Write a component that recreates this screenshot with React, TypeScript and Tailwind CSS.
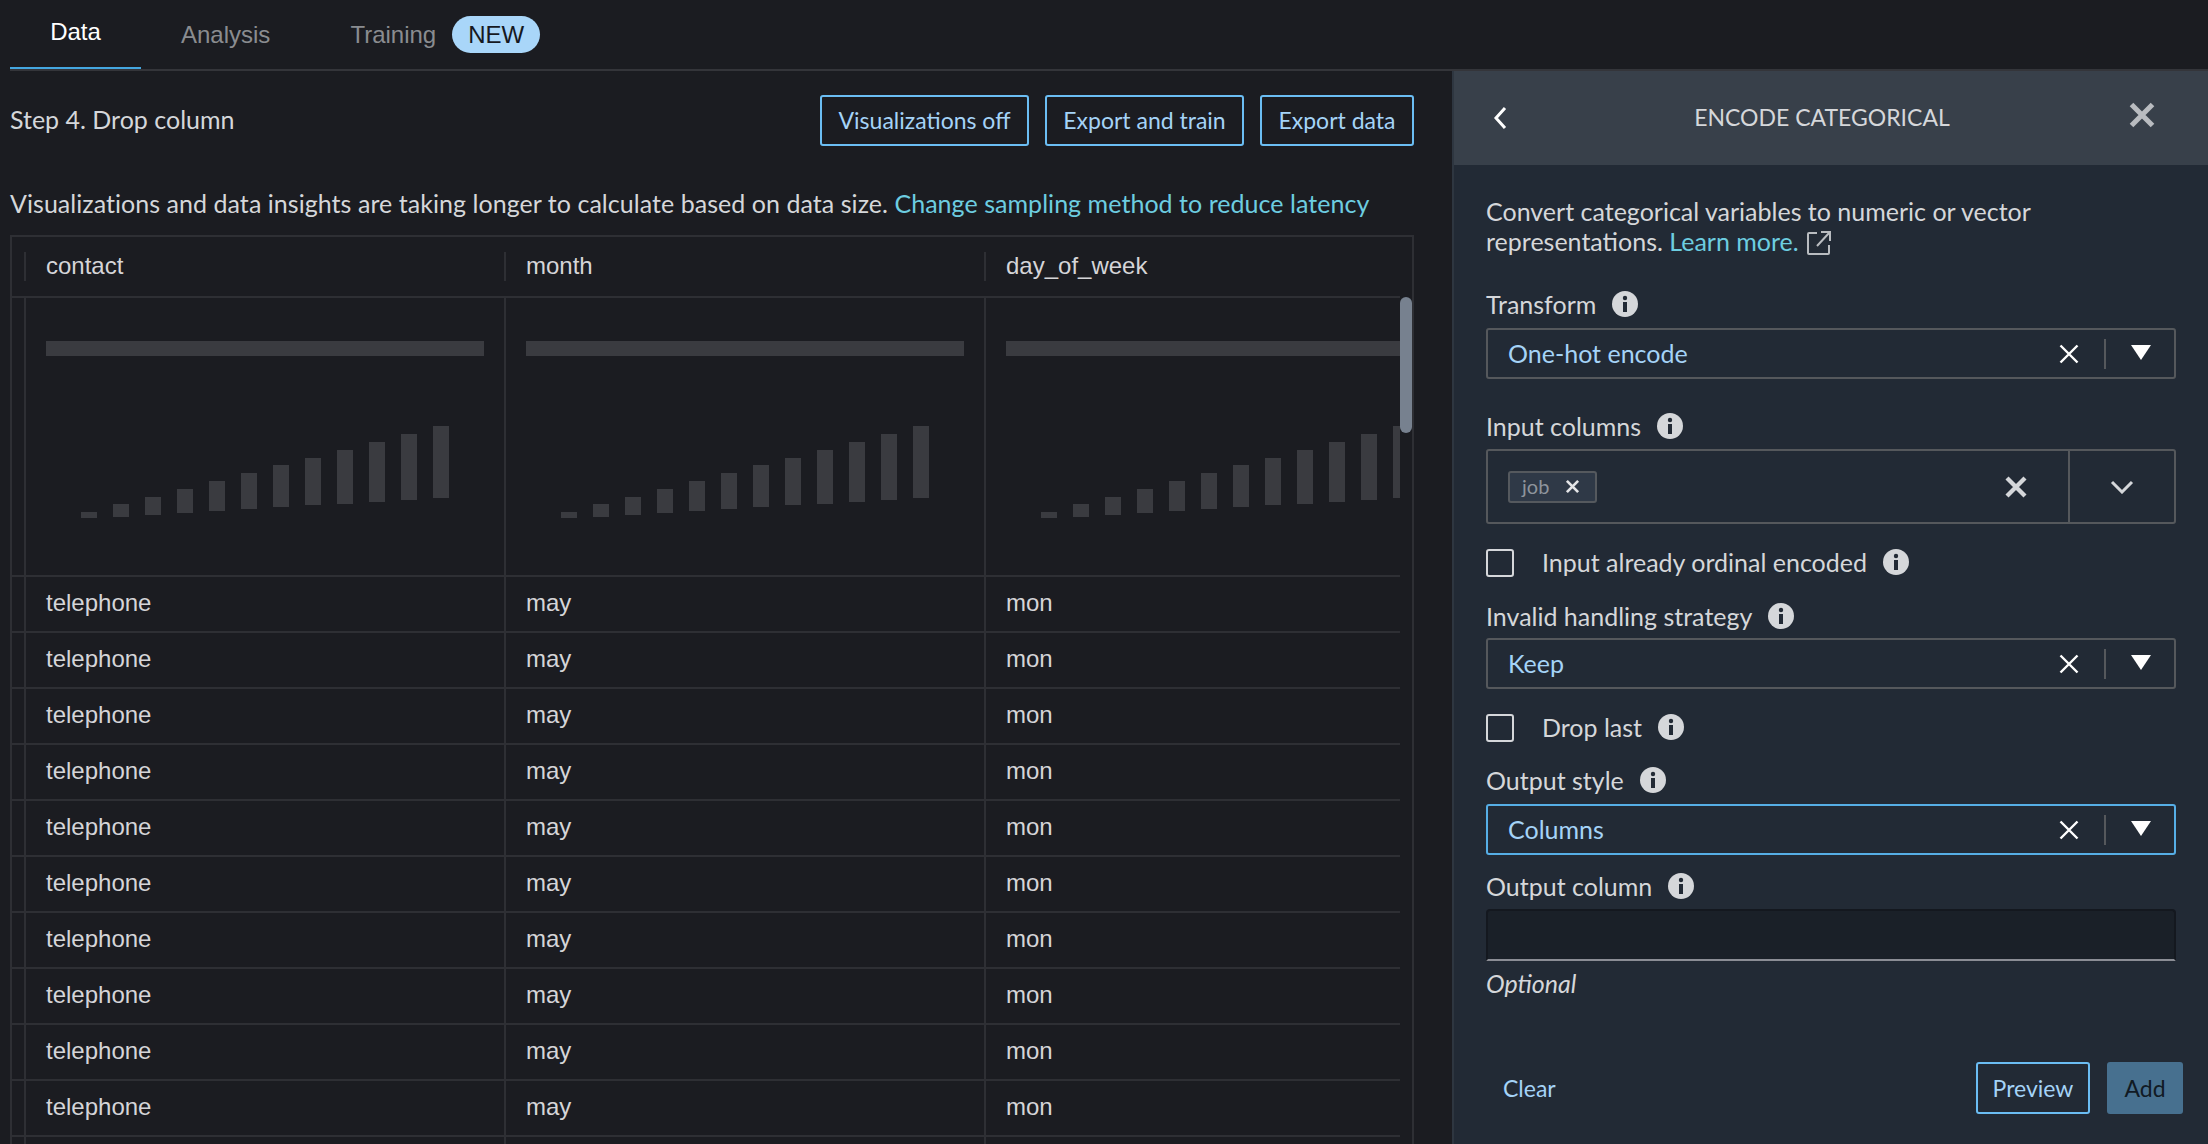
const UI = "font-['Lato','Liberation_Sans',sans-serif]";
const ARIAL = "font-['Liberation_Sans',Arial,sans-serif]";

const BARS = [
  [512, 518],
  [504, 517],
  [497, 515],
  [489, 513],
  [481, 511],
  [473, 509],
  [465, 507],
  [458, 505],
  [450, 504],
  [442, 502],
  [434, 500],
  [426, 498],
];

const ROWS = Array.from({ length: 10 });

function Histogram() {
  // coordinates are page y minus the top of the row (298)
  return (
    <svg width="438" height="277" className="shrink-0 block">
      <rect x="0" y="43" width="438" height="15" fill="#3a3b40" />
      {BARS.map(([top, bottom], i) => (
        <rect
          key={i}
          x={35 + i * 32}
          y={top - 298}
          width="16"
          height={bottom - top}
          fill="#3a3b40"
        />
      ))}
    </svg>
  );
}

function InfoIcon() {
  return (
    <svg width="26" height="26" viewBox="0 0 26 26" className="shrink-0 -mt-[2px]">
      <circle cx="13" cy="13" r="13" fill="#d5d7da" />
      <circle cx="13" cy="7" r="2.2" fill="#222a35" />
      <rect x="11" y="11" width="4" height="10" fill="#222a35" />
    </svg>
  );
}

function Label({ children, className = "" }: { children: string; className?: string }) {
  return (
    <div className={`flex items-center gap-[16px] h-[30px] text-[#d5d7da] ${className}`}>
      <span className="-mt-[1px]">{children}</span>
      <InfoIcon />
    </div>
  );
}

function ThinX() {
  return (
    <svg width="20" height="20" viewBox="0 0 20 20" className="shrink-0">
      <path d="M1.5 1.5 L18.5 18.5 M18.5 1.5 L1.5 18.5" stroke="#ffffff" strokeWidth="2.4" />
    </svg>
  );
}

function BoldX({ size, color }: { size: number; color: string }) {
  return (
    <svg width={size} height={size} viewBox="0 0 20 20" className="shrink-0">
      <path d="M2.5 2.5 L17.5 17.5 M17.5 2.5 L2.5 17.5" stroke={color} strokeWidth="3.6" />
    </svg>
  );
}

function Select({ value, focused = false, className = "" }: { value: string; focused?: boolean; className?: string }) {
  return (
    <div
      className={`flex items-center h-[51px] border-2 rounded-[3px] pl-[20px] ${
        focused ? "border-[#56aee6]" : "border-[#55585c]"
      } ${className}`}
    >
      <span className="flex-1 text-[#a5d3f7]">{value}</span>
      <ThinX />
      <div className="w-[2px] h-[30px] bg-[#55585c] ml-[25px]" />
      <svg width="20" height="15" viewBox="0 0 20 15" className="ml-[25px] mr-[23px] mb-[2px]">
        <path d="M0 0 H20 L10 15 Z" fill="#ffffff" />
      </svg>
    </div>
  );
}

function Checkbox() {
  return <div className="w-[28px] h-[28px] border-2 border-[#d5d7da] rounded-[3px] shrink-0" />;
}

function Table() {
  const cellLine = "border-b-2 border-[#2e2f34]";
  const cols = ["telephone", "may", "mon"];
  return (
    <div className={`flex ml-[10px] mt-[17px] w-[1404px] border-x-2 border-t-2 border-[#2e2f34] ${ARIAL} text-[24px] text-[#d5d5d8]`}>
      <div className="w-[1388px] overflow-hidden">
        <div className={`flex h-[61px] items-center w-[1500px] ${cellLine}`}>
          <div className="w-[12px]" />
          {["contact", "month", "day_of_week"].map((name) => (
            <div key={name} className="w-[480px] h-[29px] flex items-center border-l-2 border-[#2e2f34] pl-[20px] pb-[2px]">
              {name}
            </div>
          ))}
        </div>
        <div className={`flex h-[279px] w-[1500px] ${cellLine}`}>
          <div className="w-[12px]" />
          {[0, 1, 2].map((c) => (
            <div key={c} className="w-[480px] border-l-2 border-[#2e2f34] pl-[20px] overflow-hidden">
              <Histogram />
            </div>
          ))}
        </div>
        {ROWS.map((_, i) => (
          <div key={i} className={`flex h-[56px] w-[1500px] ${cellLine}`}>
            <div className="w-[12px]" />
            {cols.map((v) => (
              <div key={v} className="w-[480px] flex items-center border-l-2 border-[#2e2f34] pl-[20px] pb-[2px]">
                {v}
              </div>
            ))}
          </div>
        ))}
        {/* next row is only just showing at the bottom of the window, its text is below the fold */}
        <div className="flex h-[56px] w-[1500px]">
          <div className="w-[12px]" />
          {cols.map((v) => (
            <div key={v} className="w-[480px] border-l-2 border-[#2e2f34]" />
          ))}
        </div>
      </div>
      <div className="w-[12px] pt-[60px]">
        <div className="h-[136px] rounded-full bg-[#77818f]" />
      </div>
    </div>
  );
}

function Panel() {
  return (
    <div className={`w-[756px] h-full flex flex-col border-l-2 border-[#2e3640] bg-[#222a35] ${UI} text-[25px]`}>
      <div className="h-[94px] bg-[#38404a] flex items-center pl-[39px] pr-[52px] shrink-0">
        <svg width="14" height="24" viewBox="0 0 14 24" className="shrink-0">
          <path d="M12 2 L3 12 L12 22" fill="none" stroke="#ffffff" strokeWidth="3" />
        </svg>
        <div className="flex-1 text-center text-[23px] text-[#d5d7da] -mt-[2px] pl-[9px]">ENCODE CATEGORICAL</div>
        <div className="mb-[6px]">
          <BoldX size={28} color="#b9bcc0" />
        </div>
      </div>

      <div className="px-[32px]">
        <p className="mt-[31px] leading-[30px] text-[#d5d7da]">
          Convert categorical variables to numeric or vector
          <br />
          representations. <span className="text-[#6dcde0]">Learn more.</span>
          <svg width="24" height="24" viewBox="0 0 24 24" className="inline-block ml-[8px] -mt-[4px]">
            <path
              d="M10 2 H2 a1 1 0 0 0 -1 1 V22 a1 1 0 0 0 1 1 H21 a1 1 0 0 0 1 -1 V14 M14 1 H23 V10 M22.5 1.5 L10 15"
              fill="none"
              stroke="#b9bcc0"
              strokeWidth="2"
            />
          </svg>
        </p>

        <Label className="mt-[34px]">Transform</Label>
        <Select value="One-hot encode" className="mt-[8px]" />

        <Label className="mt-[33px]">Input columns</Label>
        <div className="flex mt-[7px] h-[75px] border-2 border-[#55585c] rounded-[3px]">
          <div className="flex-1 flex items-center pl-[20px] pr-[40px]">
            <div className="flex items-center h-[32px] w-[89px] pl-[12px] bg-[#2f3947] border-2 border-[#55595e] rounded-[3px]">
              <span className="text-[20px] text-[#8e949c] -mt-[2px]">job</span>
              <div className="ml-[16px]">
                <BoldX size={15} color="#e4e5e7" />
              </div>
            </div>
            <div className="flex-1" />
            <BoldX size={24} color="#d5d7da" />
          </div>
          <div className="w-[106px] flex items-center justify-center border-l-2 border-[#55585c]">
            <svg width="24" height="14" viewBox="0 0 24 14">
              <path d="M2 2 L12 12 L22 2" fill="none" stroke="#d5d7da" strokeWidth="3" />
            </svg>
          </div>
        </div>

        <div className="flex items-center mt-[24px] h-[30px]">
          <Checkbox />
          <Label className="ml-[28px]">Input already ordinal encoded</Label>
        </div>

        <Label className="mt-[24px]">Invalid handling strategy</Label>
        <Select value="Keep" className="mt-[6px]" />

        <div className="flex items-center mt-[24px] h-[30px]">
          <Checkbox />
          <Label className="ml-[28px]">Drop last</Label>
        </div>

        <Label className="mt-[23px]">Output style</Label>
        <Select value="Columns" focused className="mt-[8px]" />

        <Label className="mt-[17px]">Output column</Label>
        <div className="mt-[7px] h-[52px] bg-[#1a2028] border-t-2 border-x-2 border-[#14181f] border-b-2 border-b-[#8b8d95] rounded-t-[4px]" />
        <div className="mt-[7px] h-[30px] leading-[30px] italic text-[#d5d7da]">Optional</div>
      </div>

      <div className="flex items-center mt-[64px] pl-[49px] pr-[25px] text-[23px]">
        <span className="text-[#a5d3f7] flex-1">Clear</span>
        <button className="h-[52px] w-[114px] border-2 border-[#6bbdf3] rounded-[3px] text-[#a5d3f7]">Preview</button>
        <button className="h-[52px] w-[76px] ml-[17px] bg-[#47708f] rounded-[3px] text-[#111a24]">Add</button>
      </div>
    </div>
  );
}

function Button({ children, width }: { children: string; width: string }) {
  return (
    <button className={`h-[51px] ${width} border-2 border-[#6bbdf3] rounded-[3px] text-[23px] text-[#a5d3f7]`}>
      {children}
    </button>
  );
}

export default function App() {
  return (
    <div className={`w-[2208px] h-[1144px] overflow-hidden bg-[#1b1c21] flex flex-col ${ARIAL}`}>
      <div className="h-[71px] shrink-0 pl-[10px] text-[24px]">
        <div className="flex h-full border-b-2 border-[#34353a]">
          <div className="w-[131px] h-[69px] flex items-center justify-center pb-[3px] text-white border-b-2 border-[#44a6e0]">
            Data
          </div>
          <div className="ml-[40px] flex items-center text-[#8a8c90]">Analysis</div>
          <div className="ml-[80px] flex items-center text-[#8a8c90]">
            Training
            <span className="ml-[16px] w-[88px] h-[37px] flex items-center justify-center rounded-full bg-[#a9d6f9] text-[#16191f]">
              NEW
            </span>
          </div>
        </div>
      </div>

      <div className="flex flex-1 min-h-0">
        <div className={`w-[1452px] shrink-0 ${UI} text-[25px]`}>
          <div className="flex items-center justify-between mt-[24px] h-[51px] pl-[10px] pr-[38px]">
            <span className="text-[#d5d7da] -mt-[2px]">Step 4. Drop column</span>
            <div className="flex gap-[16px]">
              <Button width="w-[209px]">Visualizations off</Button>
              <Button width="w-[199px]">Export and train</Button>
              <Button width="w-[154px]">Export data</Button>
            </div>
          </div>
          <p className="mt-[42px] pl-[10px] h-[30px] leading-[30px] tracking-[0.045px] text-[#d5d7da]">
            Visualizations and data insights are taking longer to calculate based on data size.{" "}
            <span className="text-[#6dcde0]">Change sampling method to reduce latency</span>
          </p>
          <Table />
        </div>
        <Panel />
      </div>
    </div>
  );
}
